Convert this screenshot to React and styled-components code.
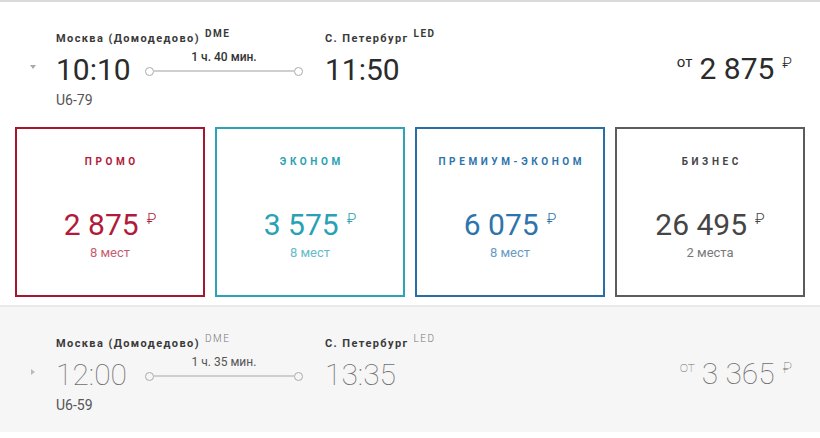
import styled, { createGlobalStyle } from "styled-components";

const GlobalStyle = createGlobalStyle`
  body {
    margin: 0;
    background: #fff;
    font-family: Roboto, "Liberation Sans", sans-serif;
    color: #333;
  }
`;

const Page = styled.div`
  width: 820px;
  height: 438px;
  overflow: hidden;
`;

const Flight = styled.section`
  border-top: 2px solid ${(p) => (p.$muted ? "#e9e9e9" : "#dadada")};
  background: ${(p) => (p.$muted ? "#f6f6f6" : "#fff")};
`;

const Header = styled.div`
  display: grid;
  grid-template-columns: 56px 89px 180px 1fr auto;
  padding: 25px 28px 18px 0;
`;

const Toggle = styled.span`
  grid-column: 1;
  grid-row: 2;
  align-self: center;
  justify-self: start;
  margin-left: ${(p) => (p.$open ? "30px" : "31px")};
  width: 0;
  height: 0;
  ${(p) =>
    p.$open
      ? `border-left: 3px solid transparent;
         border-right: 3px solid transparent;
         border-top: 4px solid #aaa;`
      : `border-top: 3px solid transparent;
         border-bottom: 3px solid transparent;
         border-left: 4px solid #bbb;`}
`;

const City = styled.div`
  grid-row: 1;
  grid-column: ${(p) => p.$col};
  font-size: 11px;
  line-height: 14px;
  font-weight: 700;
  letter-spacing: 1.4px;
  color: #3a3a3a;
  white-space: nowrap;
`;

const Iata = styled.sup`
  margin-left: 5px;
  font-size: 10px;
  letter-spacing: 1.5px;
  vertical-align: 5px;
  font-weight: ${(p) => (p.$muted ? 300 : 700)};
  color: ${(p) => (p.$muted ? "#777" : "#3a3a3a")};
`;

const Time = styled.div`
  grid-row: 2;
  grid-column: ${(p) => p.$col};
  margin-top: 7px;
  font-size: 30px;
  line-height: 34px;
  font-weight: ${(p) => (p.$muted ? 100 : 400)};
  color: ${(p) => (p.$muted ? "#6f6f6f" : "#2b2b2b")};
`;

const Code = styled.div`
  grid-row: 3;
  grid-column: 2;
  margin-top: 4px;
  font-size: 14px;
  line-height: 18px;
  color: #555;
`;

const Timeline = styled.div`
  grid-row: 1 / 3;
  grid-column: 3;
  display: flex;
  flex-direction: column;
  justify-content: flex-end;
  width: 158px;
  padding-bottom: 12px;
`;

const Duration = styled.div`
  text-align: center;
  font-size: 12px;
  line-height: 14px;
  font-weight: ${(p) => (p.$muted ? 400 : 500)};
  color: ${(p) => (p.$muted ? "#555" : "#333")};
  margin-bottom: 3px;
`;

const Track = styled.div`
  display: flex;
  align-items: center;
  height: 8px;
`;

const Dot = styled.span`
  box-sizing: border-box;
  width: 9px;
  height: 9px;
  border: 1px solid #aaa;
  border-radius: 50%;
  background: ${(p) => (p.$muted ? "#f6f6f6" : "#fff")};
  flex: none;
`;

const Line = styled.span`
  flex: 1;
  height: 2px;
  background: #cfcfcf;
`;

const Price = styled.div`
  grid-row: 2;
  grid-column: 5;
  display: flex;
  align-items: flex-start;
  margin-top: 6px;
  color: ${(p) => (p.$muted ? "#6f6f6f" : "#2b2b2b")};
`;

const From = styled.span`
  margin-top: 3px;
  margin-right: 7px;
  font-size: 15px;
  line-height: 15px;
  font-weight: ${(p) => (p.$muted ? 100 : 400)};
`;

const Amount = styled.span`
  font-size: 30px;
  line-height: 34px;
  font-weight: ${(p) => (p.$muted ? 100 : 400)};
`;

const Rub = styled.span`
  margin-top: 4px;
  margin-left: 8px;
  font-size: 15px;
  line-height: 15px;
  font-weight: ${(p) => (p.$muted ? 100 : 300)};
`;

const Fares = styled.div`
  display: grid;
  grid-template-columns: repeat(4, 1fr);
  gap: 10px;
  padding: 0 15px 8px;
`;

const FareCard = styled.div`
  box-sizing: border-box;
  height: 170px;
  border: 2px solid ${(p) => p.$border};
  color: ${(p) => p.$color};
  display: flex;
  flex-direction: column;
  align-items: center;
  padding-top: 27px;
`;

const FareTitle = styled.div`
  font-size: 10px;
  line-height: 12px;
  font-weight: 700;
  letter-spacing: 3.6px;
  margin-right: -3.6px;
  text-transform: uppercase;
`;

const FarePrice = styled.div`
  display: flex;
  align-items: flex-start;
  margin-top: 40px;
`;

const Seats = styled.div`
  margin-top: 3px;
  font-size: 13px;
  line-height: 16px;
  opacity: 0.72;
`;

const fares = [
  { title: "промо", price: "2 875", seats: "8 мест", color: "#b11a3b", border: "#a4172f" },
  { title: "эконом", price: "3 575", seats: "8 мест", color: "#29a1b4", border: "#2ea3b5" },
  { title: "премиум-эконом", price: "6 075", seats: "8 мест", color: "#2d74ad", border: "#2a6ea6" },
  { title: "бизнес", price: "26 495", seats: "2 места", color: "#454545", border: "#5c5c5c" },
];

function FlightHeader({ flight, muted, open }) {
  return (
    <Header>
      <Toggle $open={open} />
      <City $col="2 / 4">
        {flight.from}
        <Iata $muted={muted}>{flight.fromCode}</Iata>
      </City>
      <Time $col={2} $muted={muted}>{flight.dep}</Time>
      <Code>{flight.number}</Code>
      <Timeline>
        <Duration $muted={muted}>{flight.duration}</Duration>
        <Track>
          <Dot $muted={muted} />
          <Line />
          <Dot $muted={muted} />
        </Track>
      </Timeline>
      <City $col="4 / 6">
        {flight.to}
        <Iata $muted={muted}>{flight.toCode}</Iata>
      </City>
      <Time $col={4} $muted={muted}>{flight.arr}</Time>
      <Price $muted={muted}>
        <From $muted={muted}>от</From>
        <Amount $muted={muted}>{flight.price}</Amount>
        <Rub $muted={muted}>₽</Rub>
      </Price>
    </Header>
  );
}

const flights = [
  {
    from: "Москва (Домодедово)",
    fromCode: "DME",
    to: "С. Петербург",
    toCode: "LED",
    dep: "10:10",
    arr: "11:50",
    duration: "1 ч. 40 мин.",
    number: "U6-79",
    price: "2 875",
  },
  {
    from: "Москва (Домодедово)",
    fromCode: "DME",
    to: "С. Петербург",
    toCode: "LED",
    dep: "12:00",
    arr: "13:35",
    duration: "1 ч. 35 мин.",
    number: "U6-59",
    price: "3 365",
  },
];

export default function App() {
  return (
    <Page>
      <GlobalStyle />
      <Flight>
        <FlightHeader flight={flights[0]} open />
        <Fares>
          {fares.map((f) => (
            <FareCard key={f.title} $color={f.color} $border={f.border}>
              <FareTitle>{f.title}</FareTitle>
              <FarePrice>
                <Amount>{f.price}</Amount>
                <Rub>₽</Rub>
              </FarePrice>
              <Seats>{f.seats}</Seats>
            </FareCard>
          ))}
        </Fares>
      </Flight>
      <Flight $muted>
        <FlightHeader flight={flights[1]} muted />
      </Flight>
    </Page>
  );
}
